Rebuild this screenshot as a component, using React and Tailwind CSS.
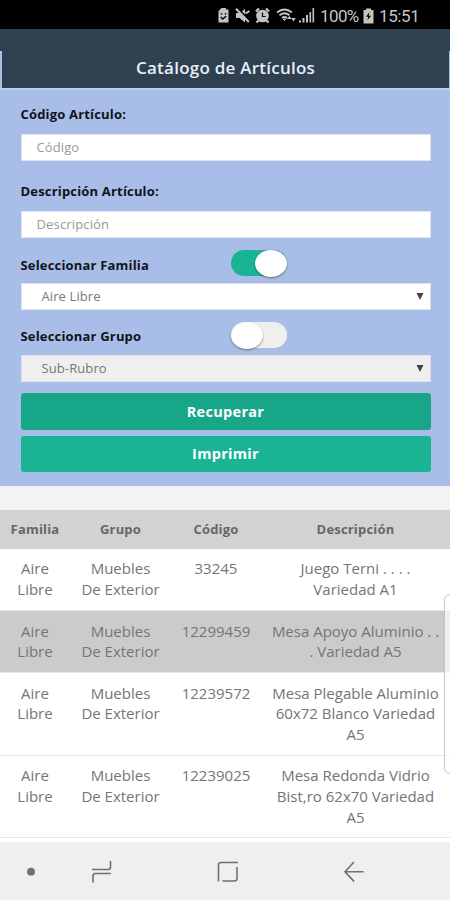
import React from "react";

const rows = [
  { code: "33245", lines: ["Juego Terni . . . .", "Variedad A1"] },
  { code: "12299459", lines: ["Mesa Apoyo Aluminio . .", ". Variedad A5"], active: true },
  { code: "12239572", lines: ["Mesa Plegable Aluminio", "60x72 Blanco Variedad", "A5"] },
  { code: "12239025", lines: ["Mesa Redonda Vidrio", "Bist,ro 62x70 Variedad", "A5"] },
];

function StatusBar() {
  return (
    <div className="flex h-[29px] shrink-0 items-center bg-black pt-[3px] pl-[218px] text-[#c4c4c4]">
      <svg width="97" height="18" viewBox="218 7 97 18" fill="none" stroke="currentColor" className="shrink-0">
        <path d="M221.500 8h4.500v1.500h2.500V22.500h-10V11z" fill="currentColor" stroke="none" />
        <path d="M221.500 13v1.500M225.500 13v1.500M220.800 17l2 2 3.400-3" stroke="#000" strokeWidth="1.400" />
        <path d="M236 13h3.500l5.500-4v13.500l-5.500-4.500H236z" fill="currentColor" stroke="none" />
        <path d="M237.500 8l12 13" stroke="#000" strokeWidth="2" />
        <path d="M236 8.800l12.800 13.200M245.500 13.500l4-2.500" strokeWidth="2" />
        <circle cx="262.500" cy="16" r="6.300" fill="currentColor" stroke="none" />
        <path d="M256 11.500l3-3M269 11.500l-3-3M258.500 20.500l-2 2M266.500 20.500l2 2" strokeWidth="2.400" />
        <path d="M262.500 12.500v4h3" stroke="#000" strokeWidth="1.200" />
        <path d="M277 12.500q7.500-6 15 0M279.500 15.300q5-4 10 0M282 18q2.500-2 5 0" strokeWidth="1.800" />
        <path d="M283.500 19l1 1.500 1-1.500z" fill="currentColor" />
        <path d="M289.500 16l-2.800 3h5zM293.500 21.500l-2.300-3.500h4.600z" fill="currentColor" stroke="none" />
        <path d="M300 22.500v-2M303.500 22.500v-4.500M307 22.500v-7.500" strokeWidth="2" />
        <path d="M310.300 22.500v-10.500M313.300 22.500v-14.500" strokeWidth="1.600" />
      </svg>
      <span className="ml-[5px] w-[38px] font-['Roboto',sans-serif] text-[17px] leading-none tracking-[-0.6px] whitespace-nowrap">100%</span>
      <svg width="11" height="16" viewBox="0 0 11 16" className="ml-[5px] shrink-0">
        <path d="M3 .5h5V2h2.500v13.500H.5V2H3z" fill="currentColor" />
        <path d="M6.500 4L3 8.700h2.300l-1 3.800L8 7.700H5.700z" fill="#000" />
      </svg>
      <span className="ml-[5px] font-['Roboto',sans-serif] text-[17px] leading-none tracking-[-0.4px]">15:51</span>
    </div>
  );
}

function Toggle({ on }) {
  return (
    <div className={`mt-[1px] flex h-[26px] w-[56px] rounded-full ${on ? "justify-end bg-[#1ab394]" : "justify-start bg-[#efefef]"}`}>
      <div className="h-[27px] w-[32px] rounded-[50%] bg-white shadow-[0_1px_2px_rgba(0,0,0,0.45)]" />
    </div>
  );
}

function SelectBox({ text, muted }) {
  return (
    <div className={`flex h-[27px] items-center justify-between border border-[#dce1ea] pr-[6px] pl-[20px] text-[13px] text-[#777] ${muted ? "bg-[#efefef]" : "bg-white"}`}>
      <span className="tracking-[0.1px]">{text}</span>
      <svg width="8" height="8" viewBox="0 0 8 8">
        <path d="M.5 0h7L4 7z" fill="#444" />
      </svg>
    </div>
  );
}

function Label({ children }) {
  return <div className="text-[13px] leading-[20px] font-bold tracking-[0.18px] text-[#10131a]">{children}</div>;
}

export default function App() {
  return (
    <div className="relative flex h-[900px] w-[450px] flex-col overflow-hidden bg-white font-['Open_Sans',sans-serif]">
      <StatusBar />
      <header className="flex h-[61px] shrink-0 flex-col border-b-2 border-[#bccfe8] bg-[#2f4050]">
        <div className="h-[22px]" />
        <div className="flex h-[37px] items-center justify-center border-r border-l-2 border-[#a7bfe0] pb-[3px] text-[17px] font-semibold text-[#e6eff8]">
          <span className="tracking-[0.24px] whitespace-nowrap">Catálogo de Artículos</span>
        </div>
      </header>

      <section className="h-[396px] shrink-0 bg-[#a8bde7] pt-[14px] pr-[19.500px] pl-[20.500px]">
        <Label>Código Artículo:</Label>
        <div className="mt-[10px] flex h-[27px] items-center border border-[#dce4f2] bg-white pl-[15px] text-[13px] tracking-[0.1px] text-[#999]">Código</div>
        <div className="mt-[20px]">
          <Label>Descripción Artículo:</Label>
        </div>
        <div className="mt-[10px] flex h-[27px] items-center border border-[#dce4f2] bg-white pl-[15px] text-[13px] tracking-[0.15px] text-[#999]">Descripción</div>
        <div className="mt-[11px] grid h-[34px] grid-cols-[210.500px_1fr]">
          <div className="pt-[6px]"><Label>Seleccionar Familia</Label></div>
          <Toggle on />
        </div>
        <SelectBox text="Aire Libre" />
        <div className="mt-[11px] grid h-[34px] grid-cols-[210.500px_1fr]">
          <div className="pt-[5px]"><Label>Seleccionar Grupo</Label></div>
          <Toggle />
        </div>
        <SelectBox text="Sub-Rubro" muted />
        <div className="mt-[11px] flex h-[37px] items-center justify-center rounded-[3px] bg-[#18a689] text-[14.500px] font-bold tracking-[0.3px] text-white">Recuperar</div>
        <div className="mt-[6px] flex h-[36px] items-center justify-center rounded-[3px] bg-[#1ab394] text-[14.500px] font-bold tracking-[0.3px] text-white">Imprimir</div>
      </section>

      <div className="h-[24px] shrink-0 bg-[#f3f3f4]" />

      <div className="grid h-[38.700px] shrink-0 grid-cols-[70px_101px_90px_189px] items-center bg-[#d2d2d2] text-center text-[13px] font-bold tracking-[0.18px] text-[#676767]">
        <span>Familia</span>
        <span>Grupo</span>
        <span>Código</span>
        <span>Descripción</span>
      </div>
      <div className="flex-1 text-[15px] leading-[20.700px] text-[#757575]">
        {rows.map((row) => (
          <div
            key={row.code}
            className={`grid grid-cols-[70px_101px_90px_189px] border-b border-[#e7e7e7] pt-[9.800px] pb-[9.900px] text-center ${row.active ? "bg-[#cbcbcb]" : "bg-white"}`}
          >
            <div>Aire<br />Libre</div>
            <div>Muebles<br />De Exterior</div>
            <div>{row.code}</div>
            <div className="whitespace-nowrap">
              {row.lines.map((line) => <div key={line}>{line}</div>)}
            </div>
          </div>
        ))}
      </div>

      <nav className="h-[58px] shrink-0 bg-[#efefef]">
        <svg width="450" height="58" viewBox="0 842 450 58" fill="none" stroke="#707070" strokeWidth="1.600">
          <circle cx="31" cy="871.700" r="3.900" fill="#707070" stroke="none" />
          <path d="M92 869.500h16q2.500 0 2.500-2.500v-6M111 873.500H95.500q-2.500 0-2.500 2.500v6.500" />
          <path d="M238 862.500h-17q-2.500 0-2.500 2.500v16.500M237 867v11.500q0 2.500-2.500 2.500h-12" />
          <path d="M363.500 871.700H345.500M354 862l-9 9.700 9 9.700" />
        </svg>
      </nav>

      <div className="absolute top-[594px] right-[-6px] h-[180px] w-[12px] rounded-l-[6px] border border-[#c6c6c6] bg-white/70" />
    </div>
  );
}
